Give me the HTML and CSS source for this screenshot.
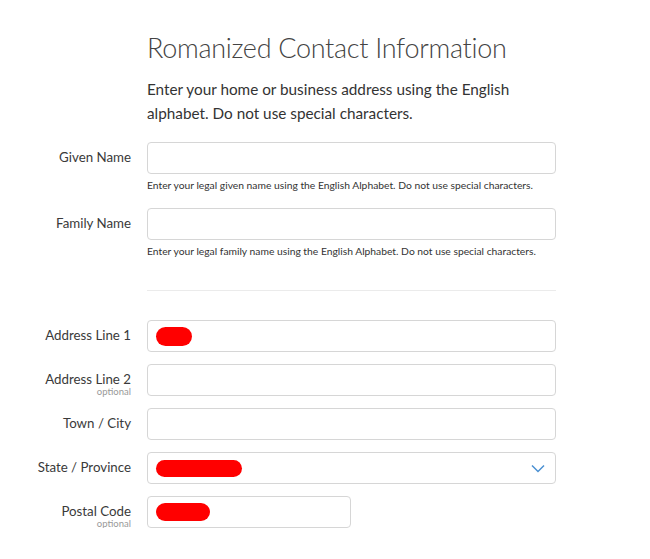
FILE: index.html
```html
<!DOCTYPE html>
<html lang="en">
<head>
    <meta charset="UTF-8">
    <meta name="viewport" content="width=device-width, initial-scale=1.0">
    <title>Romanized Contact Information</title>
    <link rel="stylesheet" href="styles.css">
</head>
<body>
    <div class="container">
        <div class="intro">
            <h1>Romanized Contact Information</h1>
            <p>Enter your home or business address using the English alphabet. Do not use special characters.</p>
        </div>

        <div class="section names">
            <div class="row">
                <label for="given-name">Given Name</label>
                <div class="field">
                    <input type="text" id="given-name">
                    <div class="hint">Enter your legal given name using the English Alphabet. Do not use special characters.</div>
                </div>
            </div>
            <div class="row">
                <label for="family-name">Family Name</label>
                <div class="field">
                    <input type="text" id="family-name">
                    <div class="hint">Enter your legal family name using the English Alphabet. Do not use special characters.</div>
                </div>
            </div>
        </div>

        <div class="divider"></div>

        <div class="section address">
            <div class="row">
                <label>Address Line 1</label>
                <div class="field">
                    <div class="box"><span class="redact redact-short"></span></div>
                </div>
            </div>
            <div class="row">
                <label for="addr2">Address Line 2<span class="optional">optional</span></label>
                <div class="field">
                    <input type="text" id="addr2">
                </div>
            </div>
            <div class="row">
                <label for="city">Town / City</label>
                <div class="field">
                    <input type="text" id="city">
                </div>
            </div>
            <div class="row">
                <label>State / Province</label>
                <div class="field">
                    <div class="box select">
                        <span class="redact redact-long"></span>
                        <svg class="chevron" width="14" height="9" viewBox="0 0 14 9">
                            <path d="M1 1.5 L7 7.5 L13 1.5" fill="none" stroke="#4a90d2" stroke-width="1.5"/>
                        </svg>
                    </div>
                </div>
            </div>
            <div class="row">
                <label>Postal Code<span class="optional">optional</span></label>
                <div class="field">
                    <div class="box small"><span class="redact redact-mid"></span></div>
                </div>
            </div>
        </div>
    </div>
</body>
</html>
```

FILE: styles.css
```css
body {
    font-family: Lato, 'Open Sans', sans-serif;
    background-color: #fff;
    color: #333;
    margin: 0;
}
.container {
    width: 556px;
    padding-top: 30px;
}
.intro {
    margin-left: 147px;
}
h1 {
    font-size: 27px;
    font-weight: 300;
    letter-spacing: -0.3px;
    color: #444;
    margin: 0;
    line-height: 36px;
    white-space: nowrap;
}
.intro p {
    font-size: 15.3px;
    line-height: 24px;
    color: #333;
    margin: 11px 0 0 0;
}
.section {
    display: flex;
    flex-direction: column;
}
.row {
    display: grid;
    grid-template-columns: 131px 1fr;
    column-gap: 16px;
    align-items: start;
}
label {
    text-align: right;
    font-size: 13.3px;
    color: #3a3a3a;
    line-height: 16px;
    padding-top: 7px;
}
.optional {
    display: block;
    font-size: 9.5px;
    line-height: 9px;
    color: #999;
}
input[type="text"], .box {
    display: block;
    width: 100%;
    height: 32px;
    box-sizing: border-box;
    border: 1px solid #d6d6d6;
    border-radius: 4px;
    background: #fff;
    font-size: 14px;
    margin: 0;
}
.hint {
    font-size: 10.3px;
    color: #333;
    line-height: 12px;
    margin-top: 5px;
}
.names {
    margin-top: 17px;
    gap: 17px;
}
.divider {
    margin: 33px 0 0 147px;
    height: 1px;
    background-color: #ebebeb;
}
.address {
    margin-top: 29px;
    gap: 12px;
}
.box {
    display: flex;
    align-items: center;
    padding: 0 8px;
}
.box.small {
    width: 204px;
}
.select {
    justify-content: space-between;
}
.chevron {
    margin-right: 2px;
}
.redact {
    display: block;
    background-color: #f00;
    border-radius: 10px;
}
.redact-short {
    width: 36px;
    height: 19px;
}
.redact-long {
    width: 86px;
    height: 17px;
}
.redact-mid {
    width: 54px;
    height: 18px;
}
```
